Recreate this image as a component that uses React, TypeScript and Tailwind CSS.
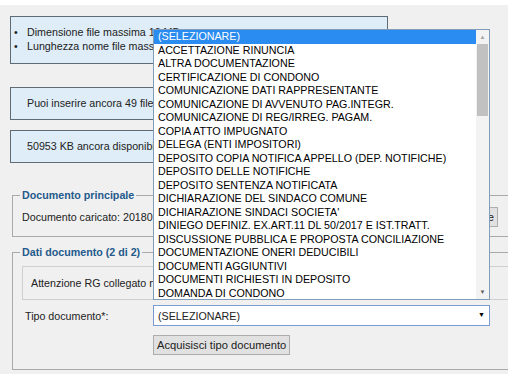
import React from 'react';

const OPTIONS = [
  '(SELEZIONARE)',
  'ACCETTAZIONE RINUNCIA',
  'ALTRA DOCUMENTAZIONE',
  'CERTIFICAZIONE DI CONDONO',
  'COMUNICAZIONE DATI RAPPRESENTANTE',
  'COMUNICAZIONE DI AVVENUTO PAG.INTEGR.',
  'COMUNICAZIONE DI REG/IRREG. PAGAM.',
  'COPIA ATTO IMPUGNATO',
  'DELEGA (ENTI IMPOSITORI)',
  'DEPOSITO COPIA NOTIFICA APPELLO (DEP. NOTIFICHE)',
  'DEPOSITO DELLE NOTIFICHE',
  'DEPOSITO SENTENZA NOTIFICATA',
  'DICHIARAZIONE DEL SINDACO COMUNE',
  "DICHIARAZIONE SINDACI SOCIETA'",
  'DINIEGO DEFINIZ. EX.ART.11 DL 50/2017 E IST.TRATT.',
  'DISCUSSIONE PUBBLICA E PROPOSTA CONCILIAZIONE',
  'DOCUMENTAZIONE ONERI DEDUCIBILI',
  'DOCUMENTI AGGIUNTIVI',
  'DOCUMENTI RICHIESTI IN DEPOSITO',
  'DOMANDA DI CONDONO',
];

// text that runs under the open list is cut where the list starts
const Clip = ({ w, children }: { w: string; children: React.ReactNode }) => (
  <span className={`block overflow-hidden whitespace-nowrap ${w}`}>{children}</span>
);

export default function App() {
  return (
    <div className="relative w-[515px] h-[380px] bg-white overflow-hidden font-['Liberation_Sans',Arial,sans-serif] text-[10.7px] text-[#222]">
      <div className="mt-[5px] w-[508px] h-[369px] bg-[#f0f0f0] overflow-hidden pt-[11px] pl-[10px]">
        {/* info boxes */}
        <div className="w-[378px] h-[48px] border border-[#5f6b75] bg-[#deedf8] pt-[9px] pl-[3px]">
          <ul className="leading-[13.5px]">
            <li className="flex"><span className="w-[13px]">•</span>Dimensione file massima 10 MB</li>
            <li className="flex"><span className="w-[13px]">•</span><Clip w="w-[126px]">Lunghezza nome file massima 100 caratteri</Clip></li>
          </ul>
        </div>
        <div className="mt-[23px] w-[378px] h-[33px] border border-[#5f6b75] bg-[#deedf8] flex items-center pl-[16px]">
          <Clip w="w-[126px]">Puoi inserire ancora 49 file</Clip>
        </div>
        <div className="mt-[10px] w-[378px] h-[33px] border border-[#5f6b75] bg-[#deedf8] flex items-center pl-[16px]">
          <Clip w="w-[126px]">50953 KB ancora disponibili</Clip>
        </div>

        {/* documento principale */}
        <fieldset className="mt-[24px] ml-[2px] w-[520px] h-[50px] border border-[#a9a9a9] pl-[9px] pr-[33px]">
          <legend className="-ml-[2px] px-[2px] font-bold text-[10.7px] text-[#245a8c]">Documento principale</legend>
          <div className="flex items-center justify-between mt-[4px]">
            <Clip w="w-[131px]">Documento caricato: 20180514_ricorso.pdf</Clip>
            <button className="h-[20px] pl-[2px] pr-[3px] border border-[#adadad] bg-[#e1e1e1] whitespace-nowrap">
              <Clip w="w-[6px]">e</Clip>
            </button>
          </div>
        </fieldset>

        {/* dati documento */}
        <fieldset className="mt-[7px] ml-[2px] w-[520px] h-[126px] border border-[#a9a9a9] pl-[9px]">
          <legend className="-ml-[2px] px-[2px] font-bold text-[10.7px] text-[#245a8c]">Dati documento (2 di 2)</legend>
          <div className="mt-[6px] h-[34px] border border-[#cfcfcf] flex items-center pl-[8px]">
            <Clip w="w-[122px]">Attenzione RG collegato non ancora presente</Clip>
          </div>
          <div className="mt-[5px] flex items-center">
            <span className="w-[131px] pl-[3px] self-start pt-[3px]">Tipo documento*:</span>
            <div className="w-[337px] h-[21px] border border-[#7a9cd3] bg-white flex items-center justify-between pl-[4px] pr-[4px]">
              <span>(SELEZIONARE)</span>
              <span className="text-[7px] text-black">▼</span>
            </div>
          </div>
          <button className="mt-[9px] ml-[131px] h-[20px] px-[3px] border border-[#adadad] bg-[#e1e1e1] text-[11.2px]">
            Acquisisci tipo documento
          </button>
        </fieldset>
      </div>

      {/* open dropdown list */}
      <div className="absolute left-[153px] top-[29px] w-[337px] h-[271px] border border-[#7f9db9] bg-white flex">
        <div className="flex-1 leading-[13.5px]">
          {OPTIONS.map((o, i) => (
            <div key={o} className={`pl-[4px] whitespace-nowrap ${i === 0 ? 'bg-[#2a8bf0] text-white' : 'text-black'}`}>
              {o}
            </div>
          ))}
        </div>
        <div className="w-[13px] bg-[#f3f3f3] flex flex-col">
          <div className="h-[14px] flex items-center justify-center text-[6px] text-[#a3a3a3]">▲</div>
          <div className="h-[72px] mx-[1px] bg-[#c1c1c1]" />
          <div className="flex-1" />
          <div className="h-[14px] flex items-center justify-center text-[6px] text-[#606060]">▼</div>
        </div>
      </div>
    </div>
  );
}
